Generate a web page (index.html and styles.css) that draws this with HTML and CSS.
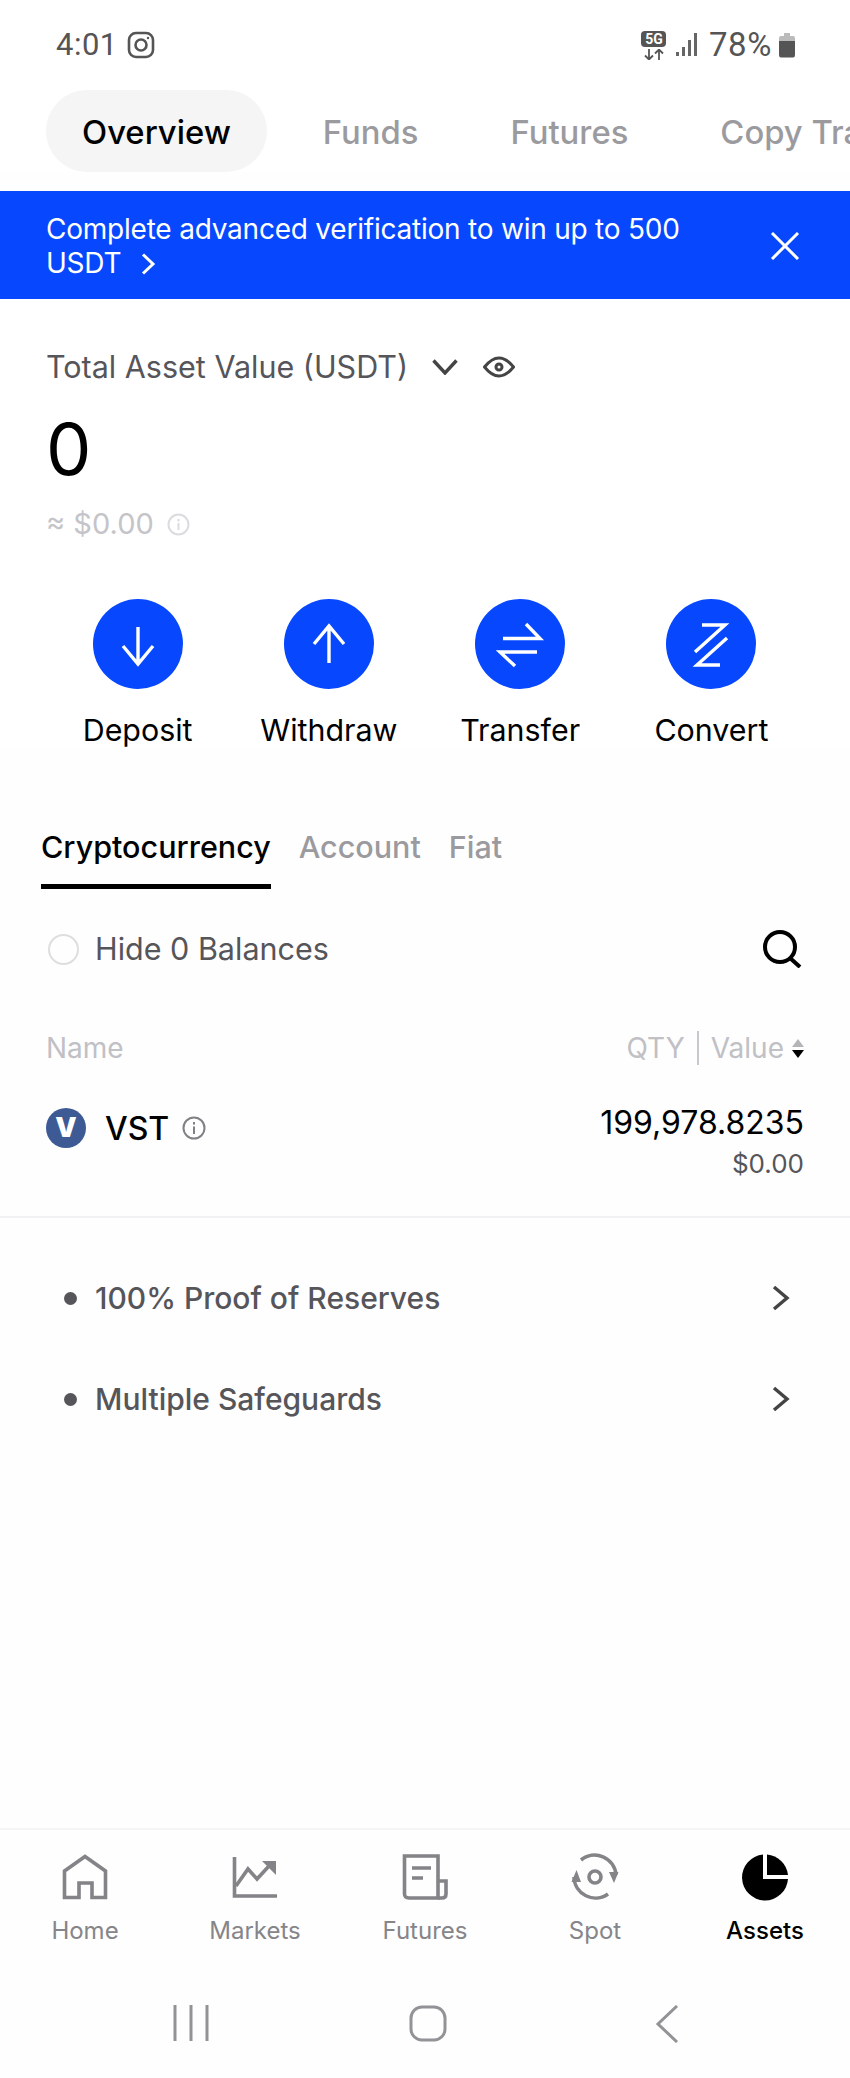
FILE: index.html
```html
<!DOCTYPE html>
<html lang="en">
<head>
  <meta charset="UTF-8" />
  <meta name="viewport" content="width=device-width, initial-scale=1.0" />
  <title>Assets</title>
  <link rel="stylesheet" href="styles.css">
</head>
<body>
  <div class="status">
    <div class="status-left">
      <span class="time">4:01</span>
      <svg class="ig" width="28" height="28" viewBox="0 0 28 28" fill="none" stroke="#555" stroke-width="2.6">
        <rect x="2" y="2" width="24" height="24" rx="7"/>
        <circle cx="14" cy="14" r="5.5"/>
        <circle cx="21" cy="7" r="1.2" fill="#555" stroke="none"/>
      </svg>
    </div>
    <div class="status-right">
      <div class="net">
        <span class="net-5g">5G</span>
        <svg width="24" height="11" viewBox="0 0 24 11" fill="none" stroke="#555" stroke-width="1.8">
          <path d="M7 0V10M3 6.5L7 10.5L11 6.5M17 11V1M13 4.5L17 .5L21 4.5"/>
        </svg>
      </div>
      <svg class="signal" width="22" height="24" viewBox="0 0 22 24" fill="#666">
        <rect x="0" y="19" width="3" height="4"/>
        <rect x="6" y="14" width="3" height="9"/>
        <rect x="12" y="7" width="3" height="16"/>
        <rect x="18" y="0" width="3" height="23"/>
      </svg>
      <span class="battery-text">78%</span>
      <svg width="18" height="25" viewBox="0 0 18 25">
        <path d="M6 0H12V3H15Q17 3 17 5V9H1V5Q1 3 3 3H6Z" fill="#bbb"/>
        <path d="M1 8H17V22Q17 24.500 15 24.500H3Q1 24.500 1 22Z" fill="#555"/>
      </svg>
    </div>
  </div>

  <div class="tabs">
    <div class="tab active">Overview</div>
    <div class="tab">Funds</div>
    <div class="tab">Futures</div>
    <div class="tab">Copy Trading</div>
  </div>

  <div class="banner">
    <p>Complete advanced verification to win up to 500 USDT
      <svg class="banner-arrow" width="16" height="22" viewBox="0 0 16 22" fill="none" stroke="#fff" stroke-width="3"><path d="M3 1.500L13 11L3 20.500"/></svg>
    </p>
    <svg class="banner-close" width="30" height="28" viewBox="0 0 30 28" fill="none" stroke="#fff" stroke-width="3"><path d="M2 1L28 27M28 1L2 27"/></svg>
  </div>

  <div class="total">
    <div class="total-head">
      <span>Total Asset Value (USDT)</span>
      <svg class="total-down" width="26" height="16" viewBox="0 0 26 16" fill="none" stroke="#444" stroke-width="3.4"><path d="M1.500 1.500L13 14L24.500 1.500"/></svg>
      <svg class="total-eye" width="32" height="22" viewBox="0 0 32 22" fill="none" stroke="#444" stroke-width="3">
        <path d="M1.500 11Q16 -7 30.500 11Q16 29 1.500 11Z"/>
        <circle cx="16" cy="11" r="3"/>
      </svg>
    </div>
    <div class="total-value">0</div>
    <div class="total-usd">
      <span>≈ $0.00</span>
      <svg class="info" width="23" height="23" viewBox="0 0 23 23" fill="none" stroke="#dcdce0" stroke-width="2">
        <circle cx="11.500" cy="11.500" r="10"/>
        <path d="M11.500 10V17M11.500 6V8.500"/>
      </svg>
    </div>
  </div>

  <div class="actions">
    <div class="action">
      <div class="action-icon">
        <svg width="90" height="90" viewBox="0 0 90 90" fill="none" stroke="#fff" stroke-width="3.4"><path d="M45 28V63M30 47L45 65L60 47"/></svg>
      </div>
      <span>Deposit</span>
    </div>
    <div class="action">
      <div class="action-icon">
        <svg width="90" height="90" viewBox="0 0 90 90" fill="none" stroke="#fff" stroke-width="3.4"><path d="M45 64V29M30 45L45 27L60 45"/></svg>
      </div>
      <span>Withdraw</span>
    </div>
    <div class="action">
      <div class="action-icon">
        <svg width="90" height="90" viewBox="0 0 90 90" fill="none" stroke="#fff" stroke-width="3.4"><path d="M28 39.500H65L51 25M62 53H25L40 67"/></svg>
      </div>
      <span>Transfer</span>
    </div>
    <div class="action">
      <div class="action-icon">
        <svg width="90" height="90" viewBox="0 0 90 90" fill="none" stroke="#fff" stroke-width="3.400"><path d="M36 26H59L29 53M61 39L31 66H54"/></svg>
      </div>
      <span>Convert</span>
    </div>
  </div>

  <div class="sub-tabs">
    <div class="sub-tab active">Cryptocurrency</div>
    <div class="sub-tab">Account</div>
    <div class="sub-tab">Fiat</div>
  </div>

  <div class="filter">
    <label class="hide-zero"><span class="radio"></span>Hide 0 Balances</label>
    <svg width="40" height="38" viewBox="0 0 40 38" fill="none" stroke="#000" stroke-width="4">
      <circle cx="18" cy="17" r="15"/>
      <path d="M28 28L38 37"/>
    </svg>
  </div>

  <div class="list-head">
    <span>Name</span>
    <div class="list-head-right">
      <span>QTY</span>
      <i class="sep"></i>
      <span>Value</span>
      <span class="sort"><i class="sort-up"></i><i class="sort-down"></i></span>
    </div>
  </div>

  <div class="coin">
    <div class="coin-name">
      <span class="coin-logo">V</span>
      <span>VST</span>
      <svg class="info" width="24" height="24" viewBox="0 0 24 24" fill="none" stroke="#808085" stroke-width="2">
        <circle cx="12" cy="12" r="10.500"/>
        <path d="M12 10.500V18M12 6V8.500"/>
      </svg>
    </div>
    <div class="coin-amount">
      <div class="coin-qty">199,978.8235</div>
      <div class="coin-usd">$0.00</div>
    </div>
  </div>

  <ul class="links">
    <li><span class="dot"></span>100% Proof of Reserves
      <svg width="18" height="26" viewBox="0 0 18 26" fill="none" stroke="#444" stroke-width="3.4"><path d="M2 2L15 13L2 24"/></svg>
    </li>
    <li><span class="dot"></span>Multiple Safeguards
      <svg width="18" height="26" viewBox="0 0 18 26" fill="none" stroke="#444" stroke-width="3.4"><path d="M2 2L15 13L2 24"/></svg>
    </li>
  </ul>

  <nav class="bottom-nav">
    <div class="nav-item">
      <svg width="48" height="48" viewBox="0 0 48 48" fill="none" stroke="#838388" stroke-width="3.6">
        <path d="M3.500 18L24 3.500L44.500 18V44.500H31V30H18V44.500H3.500Z"/>
      </svg>
      <span>Home</span>
    </div>
    <div class="nav-item">
      <svg width="48" height="48" viewBox="0 0 48 48" fill="none" stroke="#838388" stroke-width="3.600">
        <path d="M3.500 4V43H46"/>
        <path d="M5 33L17 16L26 26L38 13"/>
        <path d="M31 8H45V22Z" fill="#838388" stroke="none"/>
      </svg>
      <span>Markets</span>
    </div>
    <div class="nav-item">
      <svg width="48" height="48" viewBox="0 0 48 48" fill="none" stroke="#838388" stroke-width="3.600">
        <path d="M3.500 3H37V45H8Q3.500 45 3.500 41Z"/>
        <path d="M37 28H45V41Q45 45 41 45H37"/>
        <path d="M11 15H30M11 25H22"/>
      </svg>
      <span>Futures</span>
    </div>
    <div class="nav-item">
      <svg width="48" height="48" viewBox="0 0 48 48" fill="none" stroke="#838388" stroke-width="3.600">
        <path d="M10 7A21.500 21.500 0 0 1 45 22"/>
        <path d="M37 41A21.500 21.500 0 0 1 3 24"/>
        <circle cx="24" cy="24" r="6"/>
        <path d="M38 19H47.500L43 30Z" fill="#838388" stroke="none"/>
        <path d="M0.500 29H10L5.500 17Z" fill="#838388" stroke="none"/>
      </svg>
      <span>Spot</span>
    </div>
    <div class="nav-item active">
      <svg width="48" height="48" viewBox="0 0 48 48" fill="#000">
        <path d="M22 1.500A23 23 0 1 0 47 26H22Z"/>
        <path d="M26 1.500A23 23 0 0 1 47 22H26Z"/>
      </svg>
      <span>Assets</span>
    </div>
  </nav>

  <div class="system-nav">
    <svg width="36" height="36" viewBox="0 0 36 36" fill="none" stroke="#929297" stroke-width="3"><path d="M2 0V36M18 0V36M34 0V36"/></svg>
    <svg width="38" height="37" viewBox="0 0 38 37" fill="none" stroke="#929297" stroke-width="3"><rect x="2" y="2" width="34" height="33" rx="11"/></svg>
    <svg width="24" height="38" viewBox="0 0 24 38" fill="none" stroke="#929297" stroke-width="3"><path d="M22 1L3 19L22 37"/></svg>
  </div>
</body>
</html>
```

FILE: styles.css
```css
body {
  margin: 0;
  width: 850px;
  height: 2078px;
  display: flex;
  flex-direction: column;
  overflow: hidden;
  background: #fefefe;
  color: #000;
  font-family: "Inter", "Liberation Sans", sans-serif;
}

svg {
  display: block;
  flex-shrink: 0;
}

/* status bar */
.status {
  height: 90px;
  box-sizing: border-box;
  padding: 29px 54px 0 56px;
  display: flex;
  justify-content: space-between;
  align-items: flex-start;
  background: #fff;
  color: #555;
}

.status-left,
.status-right {
  display: flex;
  align-items: center;
}

.time {
  font-family: "Roboto", sans-serif;
  font-size: 31px;
  letter-spacing: 0.5px;
  line-height: 32px;
}

.ig {
  margin-left: 9px;
}

.net {
  display: flex;
  flex-direction: column;
  align-items: center;
  width: 26px;
  gap: 2px;
}

.net-5g {
  width: 25px;
  height: 16px;
  border-radius: 4px;
  background: #555;
  color: #fff;
  font-family: "Roboto", sans-serif;
  font-size: 14px;
  font-weight: 700;
  line-height: 16px;
  text-align: center;
}

.signal {
  margin-left: 9px;
}

.battery-text {
  margin: 0 6px 0 11px;
  font-family: "Roboto", sans-serif;
  font-size: 33px;
  letter-spacing: 0.6px;
  line-height: 32px;
}

/* top tabs */
.tabs {
  display: flex;
  gap: 20px;
  padding-left: 46px;
  height: 82px;
  overflow: hidden;
  background: #fff;
}

.tab {
  padding: 0 36px;
  border-radius: 41px;
  flex-shrink: 0;
  font-size: 32.800px;
  font-weight: 500;
  line-height: 84px;
  color: #9b9b9f;
}

.tab.active {
  background: #f5f5f5;
  color: #000;
}

/* promo banner */
.banner {
  margin-top: 19px;
  height: 108px;
  box-sizing: border-box;
  padding: 21px 50px 0 46px;
  display: flex;
  justify-content: space-between;
  background: #0748ff;
  color: #fff;
}

.banner p {
  margin: 0;
  width: 680px;
  font-size: 28px;
  letter-spacing: -0.22px;
  line-height: 34px;
}

.banner-arrow {
  display: inline-block;
  margin-left: 11px;
  vertical-align: -2px;
}

.banner-close {
  margin-top: 20px;
}

/* total */
.total {
  padding: 50px 46px 0;
  background: #fff;
}

.total-head {
  display: flex;
  align-items: center;
  font-size: 30.500px;
  line-height: 36px;
  color: #55555a;
}

.total-down {
  margin-left: 24px;
}

.total-eye {
  margin-left: 25px;
}

.total-value {
  margin-top: 20px;
  font-size: 72px;
  line-height: 88px;
}

.total-usd {
  margin-top: 13px;
  display: flex;
  align-items: center;
  font-size: 29px;
  line-height: 36px;
  color: #c4c4c9;
}

.total-usd .info {
  margin-left: 13px;
}

/* action buttons */
.actions {
  display: grid;
  grid-template-columns: repeat(4, 1fr);
  padding: 57px 43px 0 42px;
  background: #fff;
}

.action {
  display: flex;
  flex-direction: column;
  align-items: center;
  font-size: 30.400px;
  line-height: 36px;
}

.action-icon {
  width: 90px;
  height: 90px;
  margin-bottom: 23px;
  border-radius: 50%;
  background: #0748ff;
}

/* sub tabs */
.sub-tabs {
  display: flex;
  gap: 28px;
  margin-top: 81px;
  padding-left: 41px;
}

.sub-tab {
  padding-bottom: 24px;
  font-size: 30.500px;
  font-weight: 500;
  line-height: 36px;
  color: #9b9b9f;
}

.sub-tab.active {
  color: #000;
  border-bottom: 5px solid #000;
  padding-bottom: 19px;
}

/* filter row */
.filter {
  display: flex;
  justify-content: space-between;
  align-items: center;
  margin-top: 41px;
  padding: 0 48px;
}

.hide-zero {
  display: flex;
  align-items: center;
  font-size: 30.500px;
  line-height: 36px;
  color: #55555a;
}

.radio {
  width: 27px;
  height: 27px;
  margin-right: 16px;
  border: 2px solid #dedee0;
  border-radius: 50%;
}

/* coin list */
.list-head {
  display: flex;
  justify-content: space-between;
  align-items: center;
  margin-top: 62px;
  padding: 0 46px;
  font-size: 28px;
  line-height: 36px;
  color: #c0c0c5;
}

.list-head-right {
  display: flex;
  align-items: center;
}

.sep {
  width: 2px;
  height: 34px;
  margin: 0 12px;
  background: #c8c8cc;
}

.sort {
  display: flex;
  flex-direction: column;
  gap: 3px;
  margin-left: 8px;
}

.sort-up,
.sort-down {
  width: 0;
  height: 0;
  border-left: 6px solid transparent;
  border-right: 6px solid transparent;
}

.sort-up {
  border-bottom: 8px solid #b5b5b9;
}

.sort-down {
  border-top: 8px solid #000;
}

.coin {
  display: flex;
  justify-content: space-between;
  align-items: flex-start;
  height: 116px;
  box-sizing: border-box;
  margin-top: 36px;
  padding: 0 46px;
  border-bottom: 2px solid #f1f1f3;
}

.coin-name {
  display: flex;
  align-items: center;
  height: 40px;
  margin-top: 6px;
  font-size: 32px;
  font-weight: 500;
}

.coin-logo {
  width: 40px;
  height: 40px;
  margin-right: 19px;
  border-radius: 50%;
  background: #3d5a94;
  color: #fff;
  font-size: 27px;
  font-weight: 900;
  line-height: 40px;
  text-align: center;
}

.coin-name .info {
  margin-left: 13px;
}

.coin-amount {
  margin-top: 1px;
  text-align: right;
}

.coin-qty {
  font-size: 32px;
  line-height: 40px;
}

.coin-usd {
  font-size: 26px;
  line-height: 42px;
  color: #55555a;
}

/* links */
.links {
  flex: 1;
  list-style: none;
  margin: 0;
  padding: 41px 60px 0 64px;
}

.links li {
  display: flex;
  align-items: center;
  height: 78px;
  margin-bottom: 23px;
  font-size: 30px;
  font-weight: 500;
  color: #55555a;
}

.links svg {
  margin-left: auto;
}

.dot {
  width: 13px;
  height: 13px;
  margin-right: 18px;
  border-radius: 50%;
  background: #55555a;
}

/* bottom tab bar */
.bottom-nav {
  display: grid;
  grid-template-columns: repeat(5, 1fr);
  height: 117px;
  padding-top: 23px;
  border-top: 2px solid #f5f5f6;
}

.nav-item {
  display: flex;
  flex-direction: column;
  align-items: center;
  gap: 15px;
  font-size: 24px;
  line-height: 30px;
  color: #85858a;
}

.nav-item.active {
  color: #000;
  font-weight: 500;
}

/* android nav */
.system-nav {
  height: 108px;
  box-sizing: border-box;
  padding-top: 35px;
  display: flex;
  align-items: flex-start;
}

.system-nav svg:nth-child(1) {
  margin-left: 173px;
}

.system-nav svg:nth-child(2) {
  margin-left: 200px;
}

.system-nav svg:nth-child(3) {
  margin-left: 208px;
}
```
